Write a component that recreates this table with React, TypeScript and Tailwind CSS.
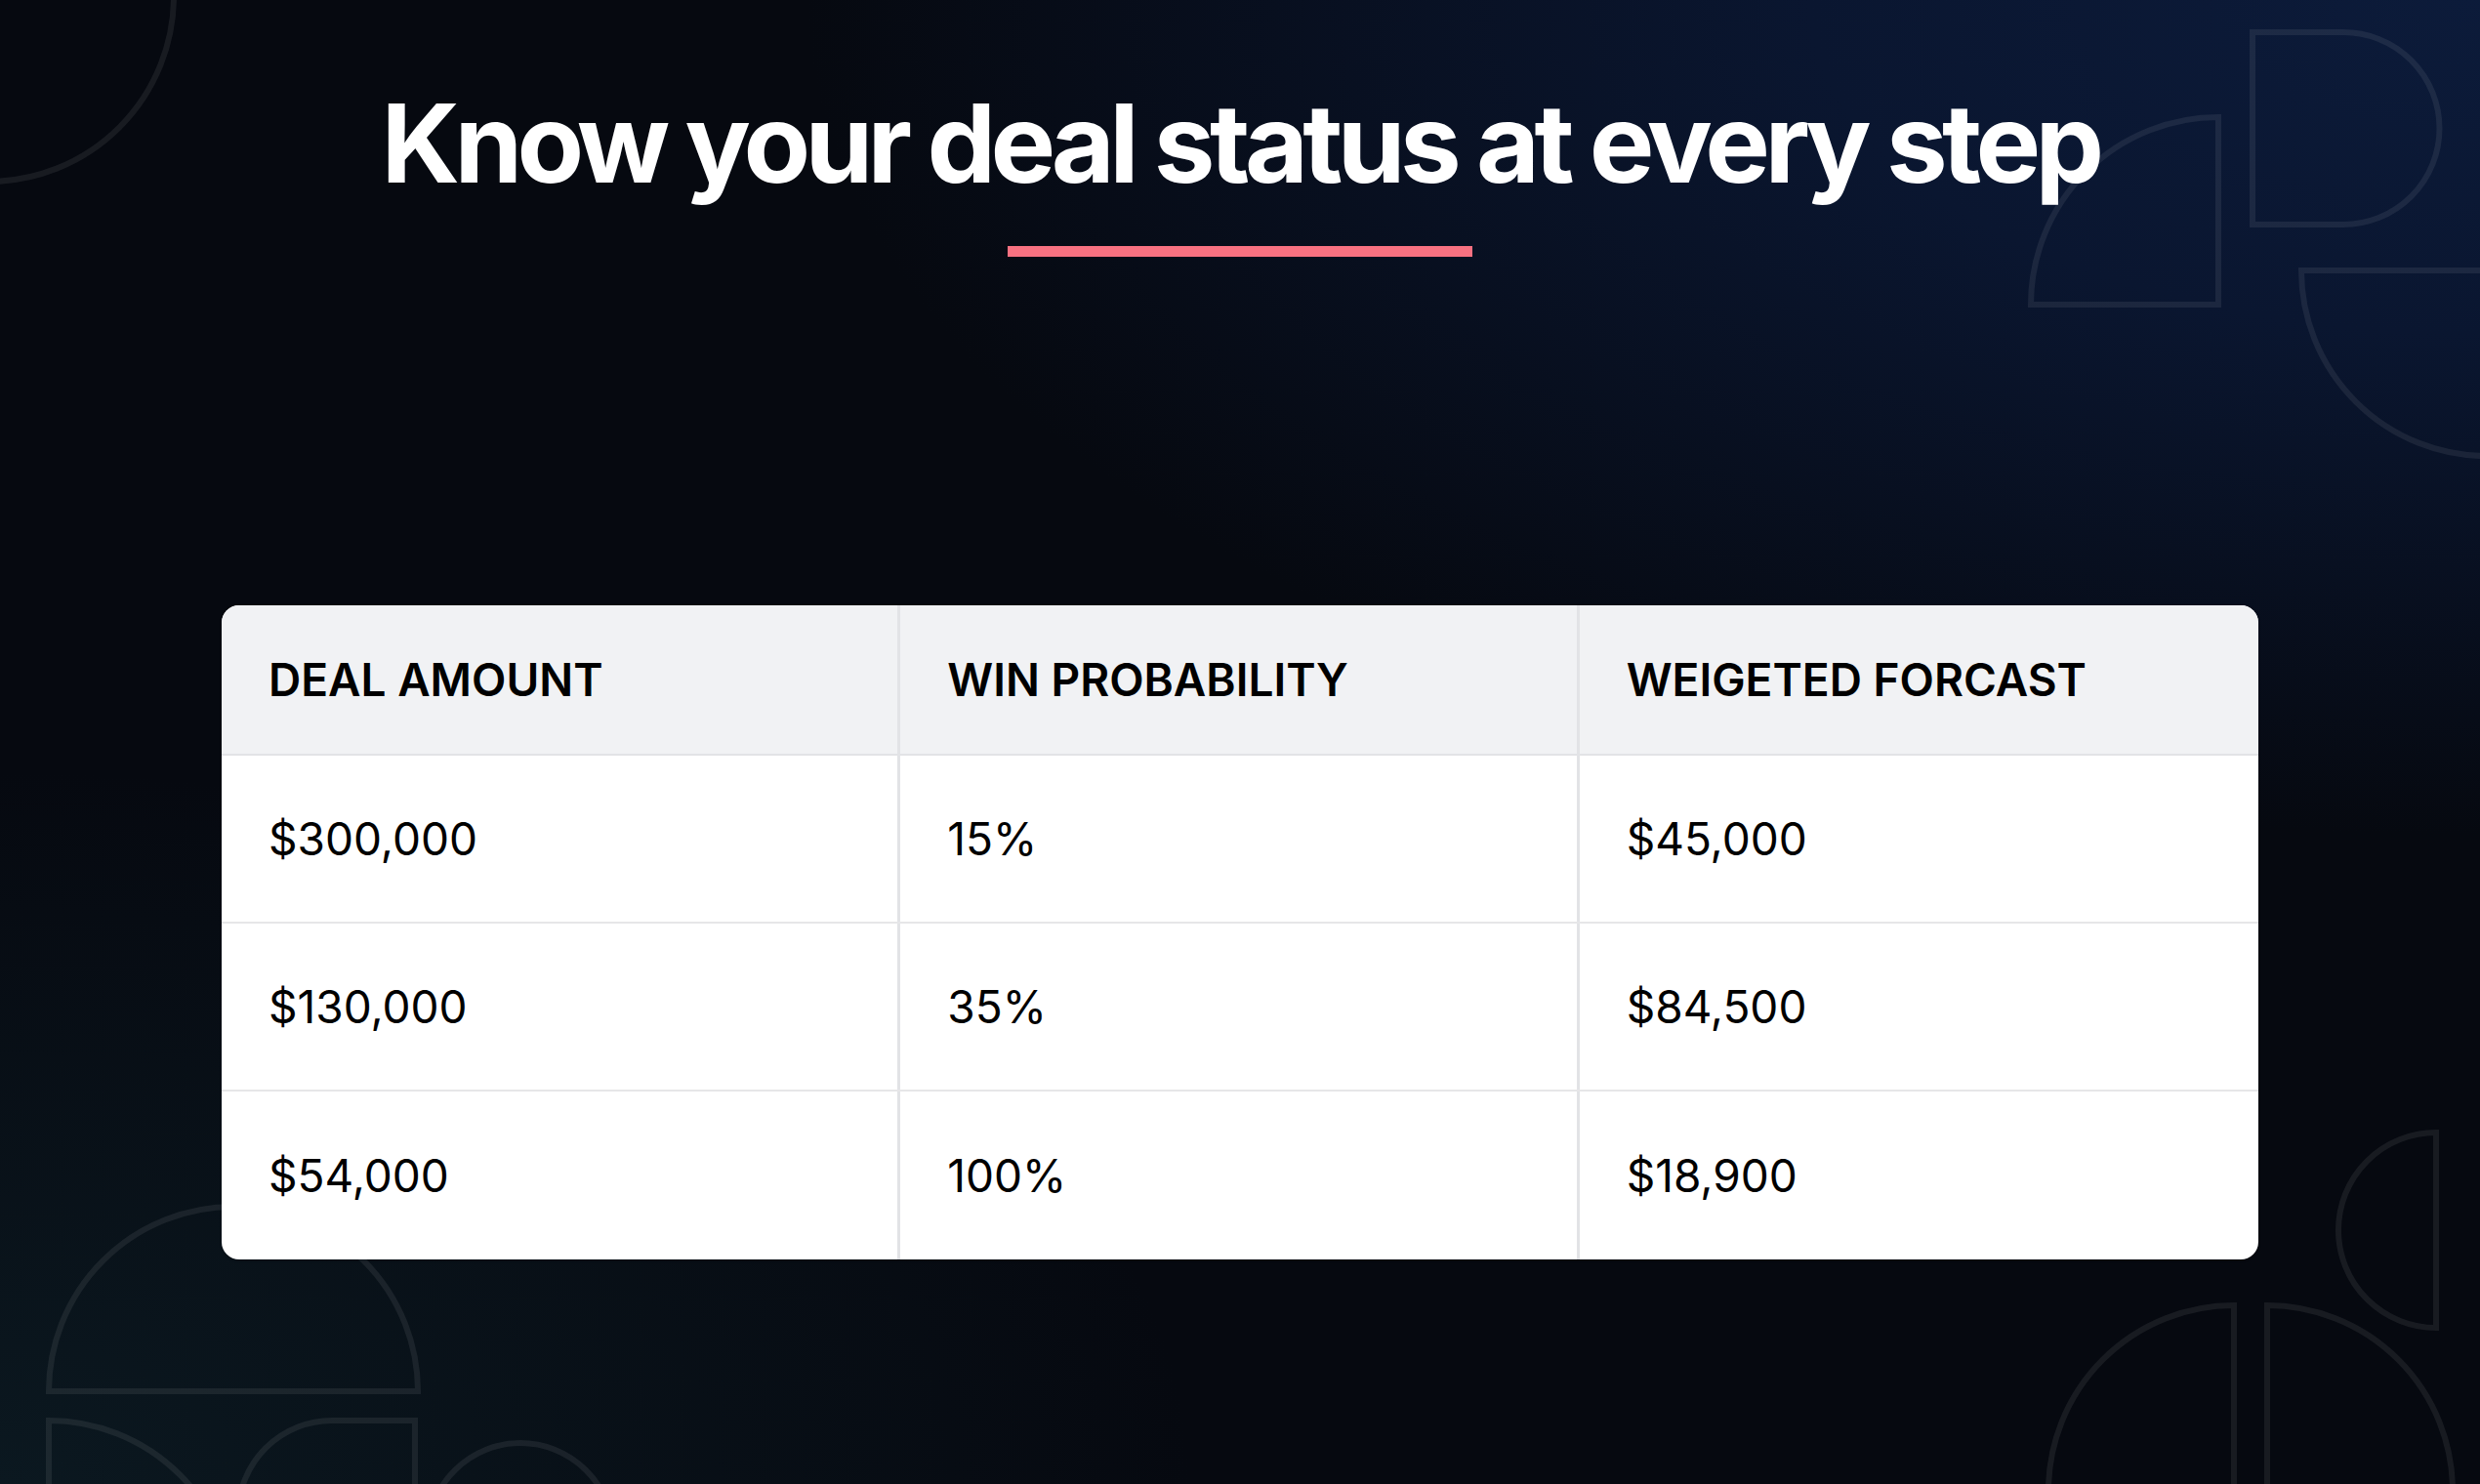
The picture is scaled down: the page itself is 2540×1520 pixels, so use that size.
const rows = [
  { amount: "$300,000", probability: "15%", forecast: "$45,000" },
  { amount: "$130,000", probability: "35%", forecast: "$84,500" },
  { amount: "$54,000", probability: "100%", forecast: "$18,900" },
];

// outline shapes scattered in the corners
const Decorations = () => (
  <svg
    className="absolute inset-0 pointer-events-none"
    width="2540"
    height="1520"
    viewBox="0 0 2540 1520"
    fill="none"
    stroke="rgba(255,255,255,0.075)"
    strokeWidth="6"
  >
    {/* top left */}
    <circle cx="-12" cy="-4" r="190" />
    {/* top right */}
    <path d="M2272 120 L2272 312 L2080 312 A192 192 0 0 1 2272 120 Z" />
    <path d="M2307 33 L2400 33 A98.5 98.5 0 0 1 2400 230 L2307 230 Z" />
    <path d="M2547 277 L2357 277 A190 190 0 0 0 2547 467" />
    {/* bottom left */}
    <path d="M50 1425 A189 189 0 0 1 428 1425 Z" />
    <path d="M50 1645 L50 1455 A190 190 0 0 1 240 1645 Z" />
    <path d="M425 1455 L340 1455 A96 96 0 0 0 244 1551 L244 1660 L425 1660 Z" />
    <circle cx="533" cy="1573" r="95" />
    {/* bottom right */}
    <path d="M2495 1160 L2495 1360 A100 100 0 0 1 2495 1160 Z" />
    <path d="M2288 1530 L2288 1337 A190 190 0 0 0 2098 1527" />
    <path d="M2322 1530 L2322 1337 A190 190 0 0 1 2512 1527" />
  </svg>
);

const App = () => {
  return (
    <div className="relative w-[2540px] h-[1520px] overflow-hidden bg-[#060910] bg-[radial-gradient(ellipse_90%_75%_at_100%_0%,#0c1b3a_0%,#0a1630_30%,transparent_75%),radial-gradient(ellipse_60%_60%_at_0%_100%,#0b1820_0%,transparent_80%)] font-['Inter',sans-serif]">
      <Decorations />

      <div className="relative flex flex-col items-center">
        <h1 className="mt-[90px] text-[112px] leading-none font-bold tracking-[-0.05em] text-white">
          Know your deal status at every step
        </h1>
        <div className="mt-[50px] w-[476px] h-[11px] bg-[#f87181]" />

        {/* deal table */}
        <div className="mt-[357px] w-[2086px] rounded-[18px] bg-white overflow-hidden shadow-[0_1px_3px_rgba(0,0,0,0.25)]">
          <div className="grid grid-cols-3 h-[154px] bg-[#f1f2f4] border-b-2 border-[#e2e3e6]">
            <div className="flex items-center pl-12 border-r-[3px] border-[#e2e3e6] text-[46px] font-semibold text-black">
              DEAL AMOUNT
            </div>
            <div className="flex items-center pl-12 border-r-[3px] border-[#e2e3e6] text-[46px] font-semibold text-black">
              WIN PROBABILITY
            </div>
            <div className="flex items-center pl-12 text-[46px] font-semibold text-black">
              WEIGETED FORCAST
            </div>
          </div>
          {rows.map((row, i) => (
            <div
              key={row.amount}
              className={`grid grid-cols-3 h-[172px] ${i < rows.length - 1 ? "border-b-2 border-[#e6e6e8]" : ""}`}
            >
              <div className="flex items-center pl-12 border-r-[3px] border-[#e2e3e6] text-[46px] text-black">
                {row.amount}
              </div>
              <div className="flex items-center pl-12 border-r-[3px] border-[#e2e3e6] text-[46px] text-black">
                {row.probability}
              </div>
              <div className="flex items-center pl-12 text-[46px] text-black">
                {row.forecast}
              </div>
            </div>
          ))}
        </div>
      </div>
    </div>
  );
};

export default App;
